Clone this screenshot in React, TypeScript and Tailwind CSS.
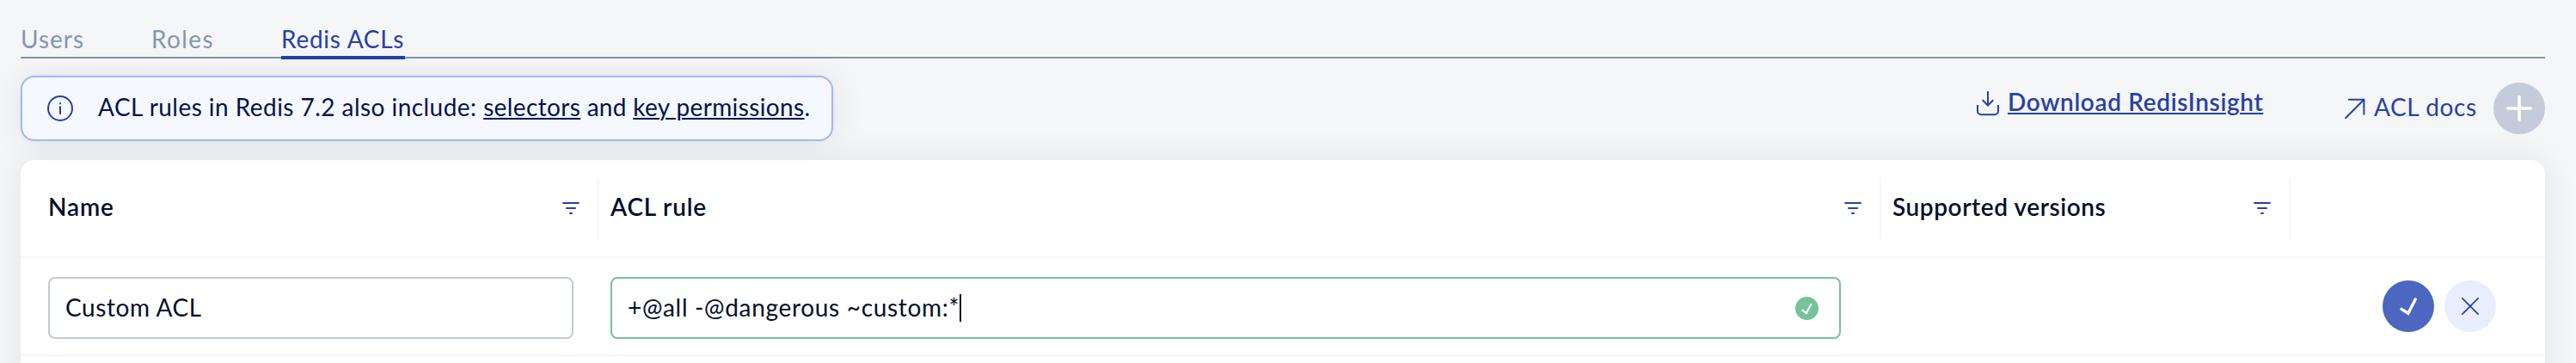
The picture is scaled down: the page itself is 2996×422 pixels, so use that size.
import type { ReactNode } from 'react';

function InfoIcon() {
  return (
    <svg className="size-8 shrink-0" viewBox="0 0 32 32" fill="none" stroke="#2740a8" strokeWidth="2">
      <circle cx="16" cy="16" r="14" />
      <path d="M16 13.6v9.4" />
      <path d="M16 9.2v2" />
    </svg>
  );
}

function DownloadIcon() {
  return (
    <svg className="h-[30px] w-7 shrink-0" viewBox="0 0 28 30" fill="none" stroke="#2740a8" strokeWidth="2">
      <path d="M14 1v16M7.7 11.3l6.3 6.2 6.3-6.2" />
      <path d="M2 17v7.2a4 4 0 0 0 4 4h16a4 4 0 0 0 4-4V17" />
    </svg>
  );
}

function ExternalIcon() {
  return (
    <svg className="size-6 shrink-0" viewBox="0 0 24 24" fill="none" stroke="#2740a8" strokeWidth="2" strokeLinecap="round">
      <path d="M1 23.3 22.4 1.7M4.8 1.7h17.6v17" />
    </svg>
  );
}

function FilterIcon() {
  return (
    <svg className="h-3.5 w-5 shrink-0" viewBox="0 0 20 14" fill="#2740a8">
      <rect x="0.3" y="0" width="19.4" height="2" />
      <rect x="4.2" y="6" width="11.6" height="2" />
      <rect x="8.2" y="12" width="3.6" height="2" />
    </svg>
  );
}

function ValidIcon() {
  return (
    <svg className="size-[27px] shrink-0" viewBox="0 0 27 27" fill="none">
      <circle cx="13.5" cy="13.5" r="13.5" fill="#76c29b" />
      <path d="m7.6 15 5.2 4L18.6 8.2" stroke="white" strokeWidth="2.2" />
    </svg>
  );
}

function HeaderCell({ title, className }: { title: string; className: string }) {
  return (
    <div className={`flex h-[72px] items-center justify-between border-r-2 border-[#f5f6f7] pr-[21px] ${className}`}>
      <span className="pb-1 font-semibold">{title}</span>
      <FilterIcon />
    </div>
  );
}

function Tab({ children, className }: { children: ReactNode; className: string }) {
  return <a className={`-mb-[3px] border-b-4 pb-0.5 ${className}`}>{children}</a>;
}

export default function App() {
  return (
    <div className="h-[422px] w-full overflow-hidden bg-[#f4f6f8] pr-9 pl-6 font-['Lato',sans-serif] text-[28px] leading-9 whitespace-nowrap text-[#020f2b]">
      <nav className="flex h-[68px] items-end border-b-2 border-[#8496b2] text-[#8496b2]">
        <Tab className="w-[152px] border-transparent tracking-[1px]">Users</Tab>
        <Tab className="w-[151px] border-transparent tracking-[1.4px]">Roles</Tab>
        <Tab className="w-36 border-[#2740a8] tracking-[0.75px] text-[#2740a8]">Redis ACLs</Tab>
      </nav>

      <div className="mt-5 flex h-[76px] items-center justify-between">
        <div className="flex h-full w-[945px] items-center rounded-2xl border-2 border-[#a5b7ef] bg-[#f5f8ff] pl-7 text-[#05124f] shadow-[0_0_40px_rgba(0,0,0,0.08),0_0_4px_rgba(0,0,0,0.06)]">
          <InfoIcon />
          <p className="pb-1 pl-7 whitespace-pre">
            <span className="tracking-[0.45px]">{'ACL rules in Redis 7.2 also include: '}</span>
            <a className="tracking-[0.37px] underline decoration-2 underline-offset-2">selectors</a>
            <span className="tracking-[0.28px]">{' and '}</span>
            <a className="tracking-[0.37px] underline decoration-2 underline-offset-2">key permissions</a>.
          </p>
        </div>

        <div className="flex items-center text-[#2740a8]">
          <div className="flex items-center pb-3">
            <DownloadIcon />
            <a className="ml-[9px] w-[298px] pb-1 font-semibold tracking-[0.64px] underline decoration-2 underline-offset-2">
              Download RedisInsight
            </a>
          </div>
          <div className="ml-[94px] flex items-center">
            <ExternalIcon />
            <a className="ml-2.5 w-[139px] pb-1 tracking-[0.6px]">ACL docs</a>
          </div>
          <button className="size-[60px] rounded-full bg-[#c4cbda]">
            <svg viewBox="0 0 60 60" fill="none" stroke="white" strokeWidth="3.6" strokeLinecap="round">
              <path d="M30 16.6v26.8M16.6 30h26.8" />
            </svg>
          </button>
        </div>
      </div>

      <section className="mt-[22px] h-[300px] rounded-t-2xl bg-white shadow-[0_0_40px_rgba(0,0,0,0.08)]">
        <div className="flex h-[114px] items-center border-b-2 border-[#f5f6f7]">
          <HeaderCell title="Name" className="w-[673px] pl-8 tracking-[0.9px]" />
          <HeaderCell title="ACL rule" className="w-[1491px] pl-[13px] tracking-[0.8px]" />
          <HeaderCell title="Supported versions" className="w-[476px] pl-[13px] tracking-[0.57px]" />
        </div>

        <div className="flex h-[114px] border-b-2 border-[#f5f6f7] pt-[22px]">
          <div className="ml-8 flex h-[72px] w-[611px] items-center rounded-lg border-2 border-[#c1c9d9] pl-[18px]">
            <span className="pb-0.5 tracking-[0.6px]">Custom ACL</span>
          </div>
          <div className="ml-[43px] flex h-[72px] w-[1431px] items-center rounded-lg border-2 border-[#76c29b] pr-6 pl-[18px]">
            <span className="pb-0.5 tracking-[0.68px]">+@all -@dangerous ~custom:*</span>
            <span className="h-8 w-0.5 bg-[#020f2b]" />
            <span className="ml-auto">
              <ValidIcon />
            </span>
          </div>
          <div className="mt-1 ml-auto flex gap-3 pr-[57px]">
            <button className="size-[60px] rounded-full bg-[#4b67bf]">
              <svg viewBox="0 0 60 60" fill="none" stroke="white" strokeWidth="3.4" strokeLinecap="round">
                <path d="m22 33.4 7.8 4.9L38.2 22" />
              </svg>
            </button>
            <button className="size-[60px] rounded-full bg-[#e8eefe]">
              <svg viewBox="0 0 60 60" fill="none" stroke="#2740a8" strokeWidth="1.7">
                <path d="m20.4 20.4 19.2 19.2M39.6 20.4 20.4 39.6" />
              </svg>
            </button>
          </div>
        </div>
      </section>
    </div>
  );
}
